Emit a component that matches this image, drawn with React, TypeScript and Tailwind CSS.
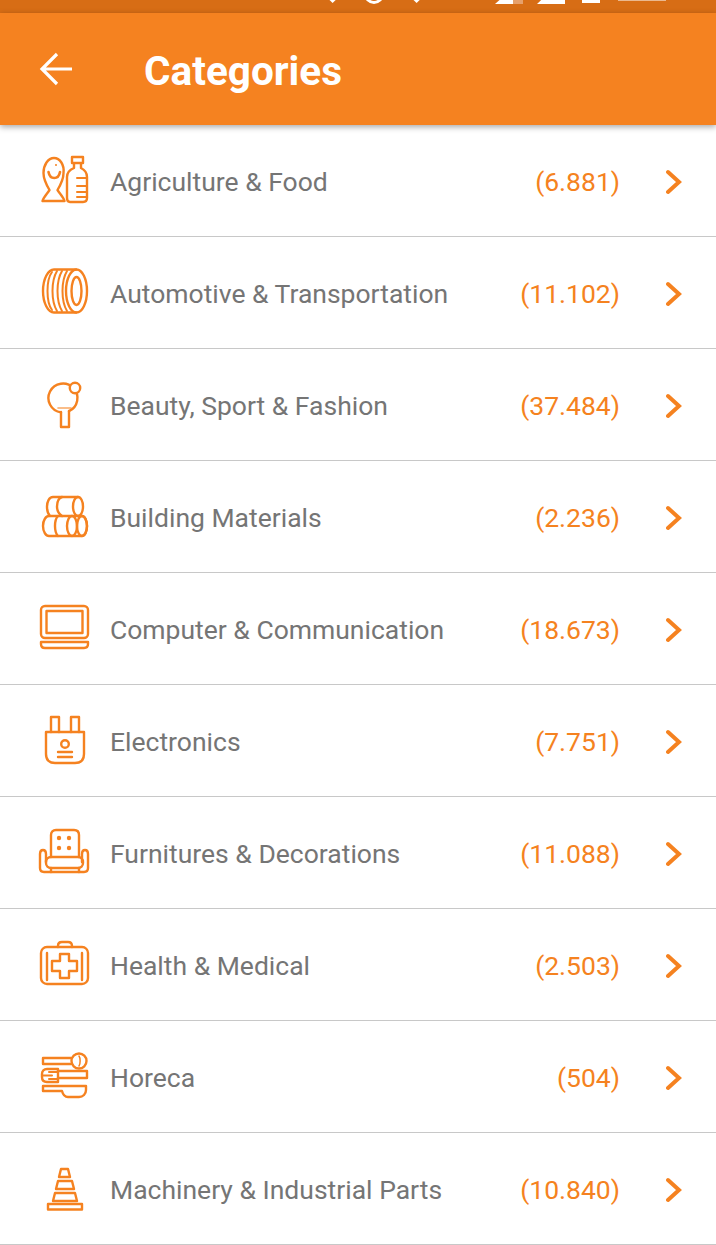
import React from "react";

const I = ({ children }: { children: React.ReactNode }) => (
  <svg width="70" height="70" viewBox="0 0 70 70" fill="none" stroke="#f58220" strokeWidth="2.400" strokeLinejoin="round" strokeLinecap="round" className="shrink-0 translate-y-[1px]">
    {children}
  </svg>
);

const Dot = ({ x, y }: { x: number; y: number }) => <circle cx={x} cy={y} r="2.200" fill="#f58220" stroke="none" />;

const icons: React.ReactNode[] = [
  <I key="a">
    <path d="M24 11c-6 0-10.500 7-10.500 15 0 7 3 12 6 17-2.500 4-6 7-7 11h22c-1-4-4.500-7-7-11 3-5 6-10 6-17C34.500 18 30 11 24 11z" />
    <path d="M18.500 25c1.500 8 10 8 11.500 0" strokeWidth="2.600" />
    <circle cx="26" cy="18" r="1" fill="#f58220" stroke="none" />
    <path d="M42 10h11v6H42zM44 16v5c-5 2-7 5-7 9v21c0 3 1 4 3 4h13c3 0 4-1 4-4V30c0-4-2-7-6-9v-5" />
    <path d="M47 31h9M47 39h9M47 45h9M47 50h9" strokeWidth="2" />
  </I>,
  <I key="b">
    <ellipse cx="46.500" cy="32" rx="10.500" ry="21.500" />
    <ellipse cx="46.500" cy="32" rx="5" ry="14" />
    <path d="M46 10.500H24C18 10.500 13 20 13 32s5 21.500 11 21.500h22" />
    <path d="M22 13c-3 4-4.500 11-4.500 19s1.500 15 4.500 19M27 12c-3 5-4.500 12-4.500 20s1.500 15 4.500 20M32 12c-3 5-4.500 12-4.500 20s1.500 15 4.500 20M37 12c-3 5-4.500 12-4.500 20s1.500 15 4.500 20" strokeWidth="2" />
  </I>,
  <I key="c">
    <path d="M31 41.400A14.500 14.500 0 1 1 39 40.200" />
    <path d="M31 41v15h8V40" />
    <circle cx="45" cy="17" r="5.200" fill="#fff" />
    <path d="M28 37h13" strokeWidth="1.600" opacity="0.7" />
  </I>,
  <I key="d">
    <path d="M20 33c-2-2-3-5-3-9.500C17 19 19 14 23 14h25" />
    <ellipse cx="48" cy="23.500" rx="5" ry="9.500" />
    <path d="M32 14c-3 1-5 5-5 9.500S29 31 32 33" />
    <path d="M19 33h33c3 0 5 5 5 10s-2 10-5 10H19c-3 0-6-4-6-10s3-10 6-10z" />
    <ellipse cx="52" cy="43" rx="5" ry="10" />
    <ellipse cx="42" cy="43" rx="5" ry="10" />
    <path d="M28 33c-2 2-3 5-3 10s1 8 3 10" />
  </I>,
  <I key="e">
    <rect x="11" y="11" width="47" height="32" rx="4" />
    <rect x="16.500" y="16" width="36" height="22" />
    <path d="M11 47h47v2c0 3-1 4-4 4H15c-3 0-4-1-4-4z" />
  </I>,
  <I key="f">
    <path d="M21 25V10h8v15M41 25V10h8v15" />
    <path d="M16 25h38v22c0 6-3 9-9 9H25c-6 0-9-3-9-9z" />
    <circle cx="35" cy="37" r="3.800" />
    <path d="M28 45h14M28 50h14" />
  </I>,
  <I key="g">
    <path d="M21 38V16c0-3 2-5 5-5h18c3 0 5 2 5 5v22" />
    <Dot x={29} y={19} />
    <Dot x={39} y={19} />
    <Dot x={29} y={29} />
    <Dot x={39} y={29} />
    <rect x="16" y="38" width="37" height="11" rx="5" />
    <path d="M16 43v-8c0-3-1-4-3-4s-3 1-3 4v14c0 3 1 4 4 4h40c3 0 4-1 4-4V35c0-3-1-4-3-4s-3 1-3 4v8" />
    <path d="M21 49v4M49 49v4" />
  </I>,
  <I key="h">
    <rect x="11" y="16" width="47" height="37" rx="6" />
    <path d="M28 16v-1c0-3 1-4 4-4h6c3 0 4 1 4 4v1" />
    <path d="M17 22v27M52 22v27" />
    <path d="M30 23h9v7h8v10h-8v7h-9v-7h-8V30h8z" />
  </I>,
  <I key="i">
    <path d="M41 15H13v6h28" />
    <circle cx="49" cy="18" r="7.500" />
    <path d="M49 13c1.500 2 1.500 8 0 10" strokeWidth="1.500" />
    <path d="M28 28h29v7H28" />
    <path d="M28 26H17c-3 0-5 2-5 5v3c0 3 2 5 5 5h11z" />
    <path d="M19 29h9M19 36h9M13 32.500h9" strokeWidth="2" />
    <path d="M13 43h43v4c0 4-3 7-7 7H38c-3 0-5-2-6-6H13z" />
  </I>,
  <I key="j">
    <path d="M31 14h7l2 8H29zM28 26h14l2 8H26zM25 38h20l2 8H23z" />
    <rect x="18" y="49" width="34" height="5.500" />
  </I>,
];

const rows: [string, string][] = [
  ["Agriculture & Food", "(6.881)"],
  ["Automotive & Transportation", "(11.102)"],
  ["Beauty, Sport & Fashion", "(37.484)"],
  ["Building Materials", "(2.236)"],
  ["Computer & Communication", "(18.673)"],
  ["Electronics", "(7.751)"],
  ["Furnitures & Decorations", "(11.088)"],
  ["Health & Medical", "(2.503)"],
  ["Horeca", "(504)"],
  ["Machinery & Industrial Parts", "(10.840)"],
];

export default function App() {
  return (
    <div className="w-[716px] h-[1245px] overflow-hidden bg-white font-['Roboto',sans-serif]">
      <div className="relative h-[13px] bg-[#d76d15] overflow-hidden">
        <div className="absolute top-[-10px] left-[330px] w-2 h-3 rotate-45 bg-white" />
        <div className="absolute top-[-16px] left-[364px] size-[20px] rounded-full border-[3px] border-white" />
        <div className="absolute top-[-10px] left-[414px] w-2 h-3 rotate-45 bg-white" />
        <div className="absolute top-0 left-[495px] w-[18px] h-[4px] bg-white [clip-path:polygon(25%_0,100%_0,100%_100%,0_100%)]" />
        <div className="absolute top-0 left-[513px] w-[10px] h-[4px] bg-[#e6a06b]" />
        <div className="absolute top-0 left-[537px] w-[28px] h-[4px] bg-white [clip-path:polygon(15%_0,100%_0,100%_100%,0_100%)]" />
        <div className="absolute top-0 left-[582px] w-[18px] h-[3px] bg-white" />
        <div className="absolute top-0 left-[618px] w-[48px] h-[1px] bg-[#eab88f]" />
      </div>
      <header className="relative z-10 h-[112px] bg-[#f58220] flex items-center pl-[39px] shadow-[0_2px_6px_rgba(0,0,0,0.35)]">
        <svg width="36" height="36" viewBox="0 0 36 36" fill="none" stroke="#fff" strokeWidth="3.200" className="shrink-0">
          <path d="M33 18H4M18 3 3 18l15 15" strokeLinejoin="miter" />
        </svg>
        <h1 className="ml-[69px] text-white text-[40.500px] font-bold leading-none translate-y-[2px]">Categories</h1>
      </header>
      <main>
        {rows.map(([name, count], i) => (
          <div key={name} className="h-[112px] flex items-center border-b border-[#c8c8c8] pl-[30px] pr-[34px]">
            {icons[i]}
            <span className="ml-[10px] flex-1 text-[26.500px] text-[#757575] translate-y-[1px]">{name}</span>
            <span className="text-[26.500px] text-[#f58220] translate-y-[1px]">{count}</span>
            <svg width="16" height="26" viewBox="0 0 16 26" fill="none" stroke="#f58220" strokeWidth="4" strokeLinecap="round" strokeLinejoin="miter" className="ml-[46px] shrink-0 translate-y-[1px]">
              <path d="M2 3l11 10L2 23" />
            </svg>
          </div>
        ))}
      </main>
    </div>
  );
}
